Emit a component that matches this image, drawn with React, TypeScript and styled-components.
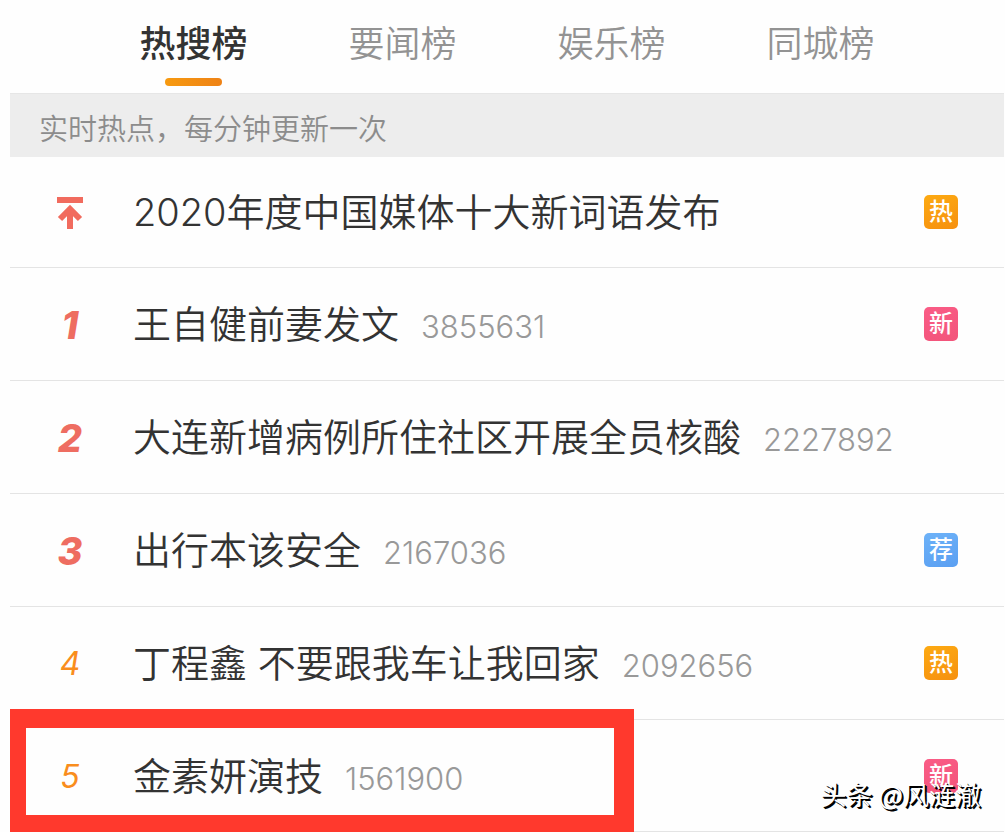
import React from "react";
import styled, { createGlobalStyle, css } from "styled-components";

const GlobalStyle = createGlobalStyle`
  *, *::before, *::after { box-sizing: border-box; }
  body {
    margin: 0;
    background: #fefefe;
    font-family: Inter, "Noto Sans CJK SC", sans-serif;
    color: #333;
  }
`;

const Page = styled.main`
  position: relative;
  padding: 0 1px 0 10px;
  overflow: hidden;
`;

const Tabs = styled.nav`
  display: flex;
  height: 93px;
  padding: 0 79px;
`;

const Tab = styled.button<{ $active?: boolean }>`
  flex: 1;
  display: flex;
  flex-direction: column;
  align-items: center;
  padding: 20px 0 0;
  border: 0;
  background: none;
  font-family: inherit;
  font-size: 36px;
  line-height: 48px;
  white-space: nowrap;
  font-weight: ${(p) => (p.$active ? 500 : 350)};
  color: ${(p) => (p.$active ? "#333" : "#939393")};
  cursor: pointer;

  ${(p) =>
    p.$active &&
    css`
      &::after {
        content: "";
        width: 57px;
        height: 8px;
        margin-top: 10px;
        border-radius: 4px;
        background: linear-gradient(90deg, #f79a10, #ee8216);
      }
    `}
`;

const Notice = styled.p`
  margin: 0;
  padding: 8px 29px 0;
  background: #ededed;
  border-top: 1px solid #e6e6e6;
  color: #8c8c8c;
  font-size: 29px;
  font-weight: 350;
  line-height: 55px;
  white-space: nowrap;
`;

const List = styled.ol`
  margin: 0;
  padding: 0;
  list-style: none;
`;

const Row = styled.li`
  position: relative;
  display: flex;
  align-items: center;
  min-height: 113px;
  padding-right: 46px;
  border-bottom: 1px solid #e4e4e4;

  &:first-child { min-height: 111px; }
  &:last-child { min-height: 112px; }
`;

const Rank = styled.span<{ $top: boolean }>`
  flex: none;
  display: flex;
  justify-content: center;
  width: 120px;
  padding-top: 2px;
  font-style: italic;
  font-size: ${(p) => (p.$top ? 38 : 32)}px;
  font-weight: ${(p) => (p.$top ? 800 : 400)};
  line-height: 48px;
  color: ${(p) => (p.$top ? "#ee6d61" : "#f98d1d")};
`;

const Topic = styled.a`
  flex: 1;
  display: flex;
  align-items: baseline;
  gap: 22px;
  padding-left: 3px;
  color: #333;
  font-size: 38px;
  font-weight: 350;
  line-height: 56px;
  white-space: nowrap;
  text-decoration: none;
`;

const Count = styled.span`
  color: #999;
  font-size: 31px;
  font-weight: 300;
  line-height: 40px;
`;

const badgeColors = {
  热: "linear-gradient(160deg, #fdaa12, #f6900f)",
  新: "linear-gradient(160deg, #fa5c86, #f2547a)",
  荐: "linear-gradient(160deg, #6db2f8, #5a9ff2)",
};
type BadgeKind = keyof typeof badgeColors;

const Badge = styled.span<{ $kind: BadgeKind }>`
  flex: none;
  width: 34px;
  height: 34px;
  border-radius: 5px;
  background: ${(p) => badgeColors[p.$kind]};
  color: #fff;
  font-size: 24px;
  font-weight: 500;
  line-height: 34px;
  text-align: center;
`;

const Highlight = styled.div`
  position: absolute;
  top: -11px;
  left: 0;
  width: 624px;
  height: 124px;
  border: solid #ff392d;
  border-width: 19px 20px 18px 16px;
  pointer-events: none;
`;

const Watermark = styled.div`
  position: absolute;
  right: 24px;
  bottom: 20px;
  color: #fff;
  font-family: "Noto Sans CJK SC", sans-serif;
  font-size: 26px;
  line-height: 36px;
  text-shadow: 1px 1px 0 #000, 2px 2px 0 #000;
  white-space: nowrap;
`;

const PinIcon = () => (
  <svg width="26" height="32" viewBox="0 0 26 32" fill="none" stroke="#f16b5e" aria-label="置顶">
    <path d="M0 3h26" strokeWidth="6" />
    <path d="M13 32V13" strokeWidth="6" />
    <path d="M3 22L13 12L23 22" strokeWidth="6" />
  </svg>
);

const tabs = ["热搜榜", "要闻榜", "娱乐榜", "同城榜"];

const topics: { title: string; count?: string; badge?: BadgeKind; marked?: boolean }[] = [
  { title: "2020年度中国媒体十大新词语发布", badge: "热" },
  { title: "王自健前妻发文", count: "3855631", badge: "新" },
  { title: "大连新增病例所住社区开展全员核酸", count: "2227892" },
  { title: "出行本该安全", count: "2167036", badge: "荐" },
  { title: "丁程鑫 不要跟我车让我回家", count: "2092656", badge: "热" },
  { title: "金素妍演技", count: "1561900", badge: "新", marked: true },
];

export default function App() {
  return (
    <Page>
      <GlobalStyle />
      <Tabs>
        {tabs.map((name, i) => (
          <Tab key={name} type="button" $active={i === 0}>
            {name}
          </Tab>
        ))}
      </Tabs>
      <Notice>实时热点，每分钟更新一次</Notice>
      <List>
        {topics.map((topic, i) => (
          <Row key={topic.title}>
            <Rank $top={i < 4}>{i === 0 ? <PinIcon /> : i}</Rank>
            <Topic href="#">
              {topic.title}
              {topic.count && <Count>{topic.count}</Count>}
            </Topic>
            {topic.badge && <Badge $kind={topic.badge}>{topic.badge}</Badge>}
            {topic.marked && <Highlight />}
          </Row>
        ))}
      </List>
      <Watermark>头条 @风涟澈</Watermark>
    </Page>
  );
}
